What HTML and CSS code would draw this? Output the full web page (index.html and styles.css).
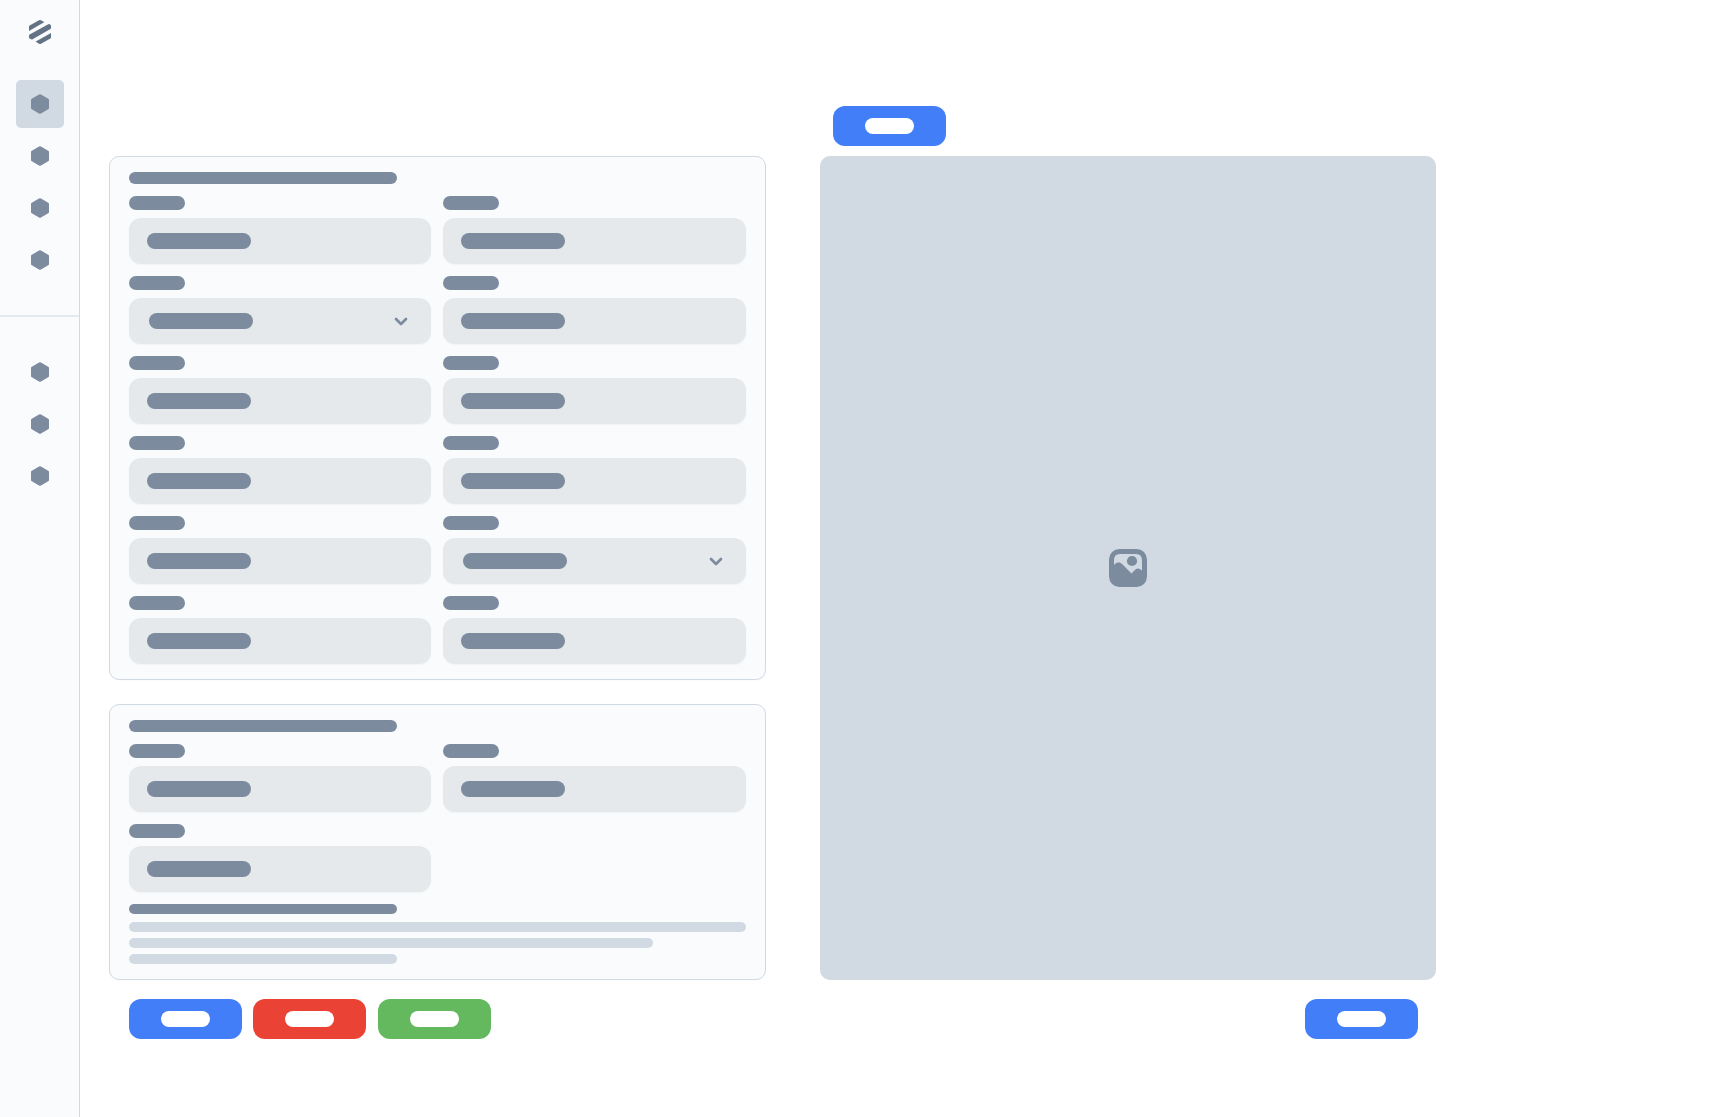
FILE: index.html
```html
<!DOCTYPE html>
<html lang="en">
<head>
<meta charset="utf-8">
<title>Form</title>
<link rel="stylesheet" href="styles.css">
</head>
<body>
<svg class="defs" width="0" height="0">
  <symbol id="hex" viewBox="0 0 18 20"><path d="M8 .6Q9-.1 10 .6L17.2 4.7Q18 5.2 18 6.100V13.900Q18 14.800 17.200 15.300L10 19.400Q9 20.100 8 19.400L.8 15.300Q0 14.800 0 13.900V6.100Q0 5.200 .8 4.700Z"/></symbol>
  <symbol id="chevron" viewBox="0 0 14 10"><path d="M2 2 7 7 12 2"/></symbol>
</svg>
<aside class="sidebar">
  <svg class="logo" viewBox="0 0 22 24">
    <path d="M0 11V6.700Q0 6 .6 5.600L10 .3Q11-.2 12 .3L14.700 1.800Q15.300 2.200 14.700 2.600Z"/>
    <path d="M.6 14.500 19.300 4.200Q20 3.900 20.600 4.200L21.400 4.700Q22 5.100 22 5.800V7.900Q22 8.700 21.400 9.100L3.600 19.200Q2.900 19.600 2.200 19.200L.7 18.400Q0 18 0 17.200V15.500Q0 14.800 .6 14.500Z"/>
    <path d="M22 12.900V17.300Q22 18 21.400 18.400L12 23.700Q11 24.200 10 23.700L7.200 22.100Q6.600 21.700 7.200 21.300Z"/>
  </svg>
  <nav class="nav nav-main">
    <a class="item active"><svg><use href="#hex"/></svg></a>
    <a class="item"><svg><use href="#hex"/></svg></a>
    <a class="item"><svg><use href="#hex"/></svg></a>
    <a class="item"><svg><use href="#hex"/></svg></a>
  </nav>
  <nav class="nav nav-extra">
    <a class="item"><svg><use href="#hex"/></svg></a>
    <a class="item"><svg><use href="#hex"/></svg></a>
    <a class="item"><svg><use href="#hex"/></svg></a>
  </nav>
</aside>
<main class="page">
  <section class="forms">
    <div class="card">
      <div class="title"></div>
      <div class="fields">
        <div class="field"><i class="label"></i><div class="input"><i class="value"></i></div></div>
        <div class="field"><i class="label"></i><div class="input"><i class="value"></i></div></div>
        <div class="field"><i class="label"></i><div class="input select"><i class="value"></i><svg class="chevron"><use href="#chevron"/></svg></div></div>
        <div class="field"><i class="label"></i><div class="input"><i class="value"></i></div></div>
        <div class="field"><i class="label"></i><div class="input"><i class="value"></i></div></div>
        <div class="field"><i class="label"></i><div class="input"><i class="value"></i></div></div>
        <div class="field"><i class="label"></i><div class="input"><i class="value"></i></div></div>
        <div class="field"><i class="label"></i><div class="input"><i class="value"></i></div></div>
        <div class="field"><i class="label"></i><div class="input"><i class="value"></i></div></div>
        <div class="field"><i class="label"></i><div class="input select"><i class="value"></i><svg class="chevron"><use href="#chevron"/></svg></div></div>
        <div class="field"><i class="label"></i><div class="input"><i class="value"></i></div></div>
        <div class="field"><i class="label"></i><div class="input"><i class="value"></i></div></div>
      </div>
    </div>
    <div class="card">
      <div class="title"></div>
      <div class="fields">
        <div class="field"><i class="label"></i><div class="input"><i class="value"></i></div></div>
        <div class="field"><i class="label"></i><div class="input"><i class="value"></i></div></div>
        <div class="field"><i class="label"></i><div class="input"><i class="value"></i></div></div>
      </div>
      <div class="text">
        <i class="line heading"></i>
        <i class="line"></i>
        <i class="line medium"></i>
        <i class="line short"></i>
      </div>
    </div>
    <div class="actions">
      <button class="btn blue"><i></i></button>
      <button class="btn red"><i></i></button>
      <button class="btn green"><i></i></button>
    </div>
  </section>
  <section class="preview">
    <button class="btn blue"><i></i></button>
    <div class="picture">
      <svg class="picture-icon" viewBox="0 0 38 38">
        <rect class="tone" width="38" height="38" rx="10.500"/>
        <path class="sky" d="M5 16V11Q5 5 11 5H27Q33 5 33 11V21.800Q29.500 18 26.200 20.800L22.500 24.500 12.800 14.800Q9 11 5 16Z"/>
        <circle class="tone" cx="23" cy="12" r="5.100"/>
      </svg>
    </div>
    <button class="btn blue end"><i></i></button>
  </section>
</main>
</body>
</html>
```
FILE: styles.css
```css
* { box-sizing: border-box; }
body { margin: 0; height: 1117px; display: flex; background: #fff; font-family: Inter, sans-serif; overflow: hidden; }
i { display: block; }
svg { display: block; }
.defs { display: none; }

.sidebar { width: 80px; flex: none; background: #fafbfd; border-right: 1px solid #d1d9e3; padding-top: 20px; }
.logo { width: 22px; height: 24px; margin-left: 29px; fill: #647285; }
.nav { display: flex; flex-direction: column; gap: 4px; padding-left: 16px; }
.nav-main { padding-top: 36px; padding-bottom: 31px; border-bottom: 2px solid #e2e9f0; }
.nav-extra { padding-top: 31px; }
.item { width: 48px; height: 48px; border-radius: 5px; display: flex; align-items: center; justify-content: center; }
.item svg { width: 18px; height: 20px; fill: #7c8b9d; }
.active { background: #d1d9e2; }

.page { display: flex; gap: 54px; padding-left: 29px; }
.forms { width: 657px; padding-top: 156px; display: flex; flex-direction: column; gap: 24px; }
.card { border: 1px solid #d1d9e3; border-radius: 10px; background: #fafbfd; padding: 15px 19px; display: flex; flex-direction: column; gap: 12px; box-shadow: 0 1px 2px rgba(0, 0, 0, .02); }
.title { width: 268.400px; height: 12px; border-radius: 6px; background: #7c8b9d; }
.fields { display: grid; grid-template-columns: 302.400px 302.600px; gap: 12px; }
.field { display: flex; flex-direction: column; gap: 8px; }
.label { width: 56px; height: 14px; border-radius: 7px; background: #7c8b9d; }
.input { height: 46px; border-radius: 12px; background: #e5e9eb; padding: 0 18px; display: flex; align-items: center; justify-content: space-between; box-shadow: 0 1px 2px rgba(0, 0, 0, .04); }
.select { padding: 0 23px 0 20px; }
.value { width: 104px; height: 16px; border-radius: 8px; background: #7c8b9d; }
.chevron { width: 14px; height: 10px; margin: 1px .4px 0 0; fill: none; stroke: #7c8b9d; stroke-width: 2.700; stroke-linecap: round; stroke-linejoin: round; }
.text { display: flex; flex-direction: column; gap: 6px; }
.line { height: 10px; border-radius: 5px; background: #d1d9e2; }
.heading { width: 268.400px; background: #7c8b9d; margin-bottom: 2px; }
.medium { width: 524px; }
.short { width: 268.400px; }

.actions { display: flex; gap: 11.400px; padding-left: 20px; margin-top: -5px; }
.btn { width: 113px; height: 40px; flex: none; border: 0; border-radius: 12px; padding: 0; display: flex; align-items: center; justify-content: center; }
.btn i { width: 49px; height: 16px; border-radius: 8px; background: #fff; }
.blue { background: #437ef9; }
.red { background: #ea4335; }
.green { background: #64b95f; }

.preview { width: 616px; padding-top: 106px; display: flex; flex-direction: column; }
.preview .btn { margin-left: 13px; }
.preview .end { margin: 19px 18px 0 auto; }
.picture { height: 824px; flex: none; margin-top: 10px; border-radius: 10px; background: #d1d9e2; display: flex; align-items: center; justify-content: center; }
.picture-icon { width: 38px; height: 38px; }
.tone { fill: #7c8b9d; }
.sky { fill: #d1d9e2; }
```
